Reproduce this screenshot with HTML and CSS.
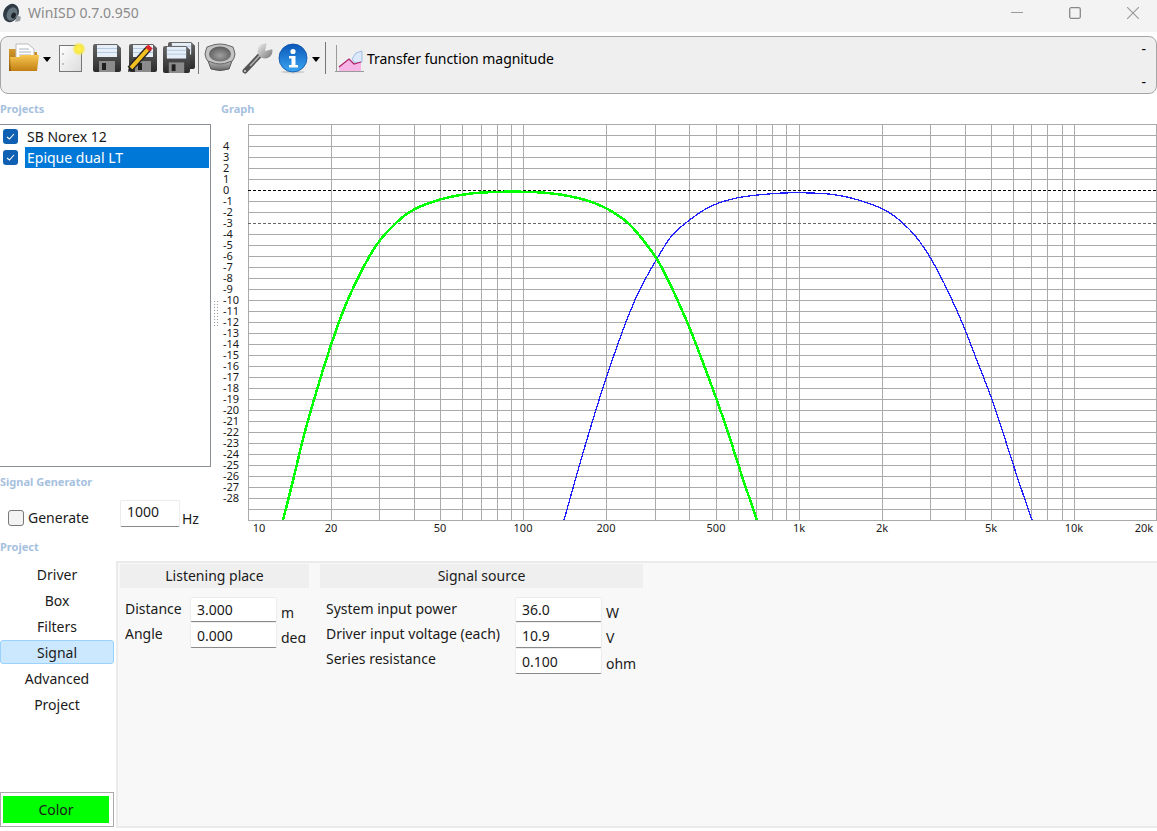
FILE: index.html
```html
<!DOCTYPE html>
<html lang="en">
<head>
    <meta charset="UTF-8">
    <meta name="viewport" content="width=device-width, initial-scale=1.0">
    <title>WinISD 0.7.0.950</title>
    <link rel="stylesheet" href="styles.css">
</head>
<body>
    <!-- shared gradients and the floppy disk used by the three save buttons -->
    <svg class="svg-defs" width="0" height="0" aria-hidden="true">
        <defs>
            <linearGradient id="disk" x1="0" y1="0" x2="0" y2="1">
                <stop offset="0" stop-color="#666"/>
                <stop offset="1" stop-color="#2b2b2b"/>
            </linearGradient>
            <linearGradient id="gold" x1="0" y1="0" x2="0" y2="1">
                <stop offset="0" stop-color="#f8c850"/>
                <stop offset="1" stop-color="#c27f14"/>
            </linearGradient>
            <linearGradient id="goldback" x1="0" y1="0" x2="0" y2="1">
                <stop offset="0" stop-color="#d59a2c"/>
                <stop offset="1" stop-color="#8f5c10"/>
            </linearGradient>
            <linearGradient id="page" x1="0" y1="0" x2="1" y2="1">
                <stop offset="0" stop-color="#fff"/>
                <stop offset="1" stop-color="#dcdcdc"/>
            </linearGradient>
            <radialGradient id="glow">
                <stop offset="0" stop-color="#fff25a"/>
                <stop offset="0.55" stop-color="#f8e83e"/>
                <stop offset="1" stop-color="#f8e83e" stop-opacity="0"/>
            </radialGradient>
            <radialGradient id="cone" cx="0.5" cy="0.6" r="0.6">
                <stop offset="0" stop-color="#a0a0a0"/>
                <stop offset="1" stop-color="#5a5a5a"/>
            </radialGradient>
            <linearGradient id="basket" x1="0" y1="0" x2="0" y2="1">
                <stop offset="0" stop-color="#d4d4d4"/>
                <stop offset="1" stop-color="#666"/>
            </linearGradient>
            <linearGradient id="steel" x1="0" y1="0" x2="1" y2="1">
                <stop offset="0" stop-color="#eee"/>
                <stop offset="1" stop-color="#777"/>
            </linearGradient>
            <linearGradient id="info" x1="0" y1="0" x2="0" y2="1">
                <stop offset="0" stop-color="#0b57b8"/>
                <stop offset="1" stop-color="#3aa6f2"/>
            </linearGradient>
            <symbol id="floppy" viewBox="0 0 28 28">
                <path d="M0 2a2 2 0 0 1 2-2H24l4 4V26a2 2 0 0 1-2 2H2a2 2 0 0 1-2-2Z" fill="url(#disk)"/>
                <rect x="4" y="1" width="20" height="12" fill="#e6eef7"/>
                <path d="M4 4.5H24M4 8.5H24" stroke="#b5cbe2"/>
                <rect x="6" y="17" width="16" height="11" fill="#8b8b8b"/>
                <rect x="9" y="19" width="4" height="7" fill="#1f1f1f"/>
            </symbol>
        </defs>
    </svg>

    <header class="titlebar">
        <svg class="app-icon" width="20" height="20" viewBox="0 0 20 20">
            <ellipse cx="9" cy="10" rx="7.5" ry="9.5" transform="rotate(25 9 10)" fill="#2f3a44"/>
            <ellipse cx="10" cy="11" rx="5" ry="7" transform="rotate(25 10 11)" fill="#66767f"/>
            <ellipse cx="11.5" cy="12.5" rx="2.2" ry="3" transform="rotate(25 11.5 12.5)" fill="#1d252b"/>
            <path d="M15 12l4 2-1 4-5 1Z" fill="#9aa1a6"/>
        </svg>
        <span class="app-title">WinISD 0.7.0.950</span>
        <div class="window-controls">
            <svg width="12" height="12" viewBox="0 0 12 12"><path d="M0 5.5H12" stroke="#999" stroke-width="1"/></svg>
            <svg width="12" height="12" viewBox="0 0 12 12"><rect x="0.7" y="0.7" width="10.6" height="10.6" rx="1.5" fill="none" stroke="#888" stroke-width="1.3"/></svg>
            <svg width="12" height="12" viewBox="0 0 12 12"><path d="M0 0L12 12M12 0L0 12" stroke="#999" stroke-width="1.1"/></svg>
        </div>
    </header>

    <div class="toolbar">
        <svg class="tool" width="34" height="32" viewBox="0 0 34 32">
            <path d="M2 7H11l2 3H30V29H2Z" fill="url(#goldback)"/>
            <path d="M9 2H21l6 5V19H9Z" fill="#fff" stroke="#bbb"/>
            <path d="M12 7H22M12 10H24M12 13H24M12 16H24" stroke="#a9b4bf"/>
            <path d="M3 15H12l2-2H32L30 29H4Z" fill="url(#gold)"/>
        </svg>
        <span class="drop-arrow"></span>
        <svg class="tool" width="36" height="32" viewBox="0 0 36 32">
            <rect x="6.5" y="3.5" width="22" height="26" fill="url(#page)" stroke="#777"/>
            <circle cx="10" cy="12" r="0.9" fill="#aaa"/>
            <circle cx="10" cy="22" r="0.9" fill="#aaa"/>
            <circle cx="26" cy="7" r="7" fill="url(#glow)"/>
        </svg>
        <svg class="tool" width="36" height="32" viewBox="0 0 36 32">
            <use href="#floppy" x="4" y="2" width="28" height="28"/>
        </svg>
        <svg class="tool" width="36" height="32" viewBox="0 0 36 32">
            <use href="#floppy" x="4" y="2" width="28" height="28"/>
            <path d="M5 27L24 6" stroke="#222" stroke-width="6.5"/>
            <path d="M5 27L24 6" stroke="#f4c020" stroke-width="4"/>
            <path d="M22.5 7.5L25.5 4.5" stroke="#d8262a" stroke-width="6"/>
            <path d="M3 30L4 24 8 28Z" fill="#222"/>
        </svg>
        <svg class="tool" width="36" height="32" viewBox="0 0 36 32">
            <use href="#floppy" x="7" y="0" width="27" height="27"/>
            <use href="#floppy" x="2" y="4" width="27" height="27"/>
        </svg>
        <span class="tool-sep"></span>
        <svg class="tool" width="40" height="32" viewBox="0 0 40 32">
            <path d="M7 16L11 27Q20 30 29 27L33 16Z" fill="url(#basket)" stroke="#555"/>
            <path d="M6 8Q6 4 10 4 20 0 30 4 34 4 34 8 36 12 34 16 33 20 29 20 20 24 11 20 7 20 6 16 4 12 6 8Z" fill="#c4c4c4" stroke="#666"/>
            <ellipse cx="20" cy="12" rx="11" ry="7.500" fill="url(#cone)"/>
        </svg>
        <svg class="tool" width="34" height="32" viewBox="0 0 34 32">
            <path d="M5 29L22 11" stroke="#555" stroke-width="5" stroke-linecap="round"/>
            <path d="M10 24L22 11" stroke="#b5b5b5" stroke-width="1.500"/>
            <circle cx="25" cy="9" r="7.500" fill="url(#steel)"/>
            <path d="M25 9L27 0 34 2 33 7Z" fill="#efefef"/>
            <circle cx="5" cy="29" r="1" fill="#ddd"/>
        </svg>
        <svg class="tool tool-info" width="36" height="32" viewBox="0 0 36 32">
            <ellipse cx="18" cy="30" rx="12" ry="1.5" fill="#cfcfcf"/>
            <circle cx="18" cy="16" r="14" fill="url(#info)"/>
            <circle cx="18" cy="16" r="14" fill="none" stroke="#0a4ea6" stroke-width="0.8"/>
            <circle cx="18" cy="9.5" r="2.6" fill="#fff"/>
            <path d="M14 14H20.5V23H23V25.500H14V23H16.500V16.500H14Z" fill="#fff"/>
        </svg>
        <span class="drop-arrow drop-arrow-info"></span>
        <span class="tool-sep tool-sep-chart"></span>
        <svg class="tool tool-chart" width="32" height="32" viewBox="0 0 32 32">
            <path d="M3.500 3V30M2 29.500H31" stroke="#9a9a9a"/>
            <path d="M19 17L23 11 29 9V20L22 21Z" fill="#dbe9fb" stroke="#9fbde4"/>
            <path d="M6 28V25L16 17 21 22 28 20V29H6Z" fill="#f6b5e6"/>
            <path d="M6 25L16 17 21 22 28 20" fill="none" stroke="#b0246a" stroke-width="1.300"/>
        </svg>
        <span class="toolbar-title">Transfer function magnitude</span>
        <div class="toolbar-end">
            <span>-</span>
            <span>-</span>
        </div>
    </div>

    <main class="upper">
        <section class="left-pane">
            <div class="pane-label">Projects</div>
            <ul class="project-list">
                <li class="project-item">
                    <span class="check"><svg width="9" height="7" viewBox="0 0 9 7"><path d="M1 4L3.500 6 8 1" fill="none" stroke="#fff" stroke-width="1.100"/></svg></span>
                    <span class="project-name">SB Norex 12</span>
                </li>
                <li class="project-item">
                    <span class="check"><svg width="9" height="7" viewBox="0 0 9 7"><path d="M1 4L3.500 6 8 1" fill="none" stroke="#fff" stroke-width="1.100"/></svg></span>
                    <span class="project-name selected">Epique dual LT</span>
                </li>
            </ul>
            <div class="pane-label generator-label">Signal Generator</div>
            <div class="generator">
                <input class="plain-check" type="checkbox" id="generate">
                <label class="generate-label" for="generate">Generate</label>
                <input class="field generator-field" type="text" value="1000">
                <span class="hz">Hz</span>
            </div>
        </section>

        <div class="splitter"><div class="grip"></div></div>

        <section class="graph-pane">
            <div class="pane-label graph-label">Graph</div>
            <svg class="graph" width="937" height="416" viewBox="220 124 937 416">
                <path class="grid" d="M248 124.500H1157M248 135.500H1157M248 146.500H1157M248 157.500H1157M248 168.500H1157M248 179.500H1157M248 201.500H1157M248 212.500H1157M248 234.500H1157M248 245.500H1157M248 256.500H1157M248 267.500H1157M248 278.500H1157M248 289.500H1157M248 300.500H1157M248 311.500H1157M248 322.500H1157M248 333.500H1157M248 344.500H1157M248 355.500H1157M248 366.500H1157M248 377.500H1157M248 388.500H1157M248 399.500H1157M248 410.500H1157M248 421.500H1157M248 432.500H1157M248 443.500H1157M248 454.500H1157M248 465.500H1157M248 476.500H1157M248 487.500H1157M248 498.500H1157M248 509.500H1157M248 520.500H1157"/>
                <path class="grid" d="M248.500 124V521M331.500 124V521M379.500 124V521M414.500 124V521M440.500 124V521M462.500 124V521M481.500 124V521M497.500 124V521M511.500 124V521M523.500 124V521M606.500 124V521M655.500 124V521M689.500 124V521M716.500 124V521M738.500 124V521M756.500 124V521M772.500 124V521M786.500 124V521M799.500 124V521M882.500 124V521M930.500 124V521M965.500 124V521M991.500 124V521M1013.500 124V521M1031.500 124V521M1047.500 124V521M1062.500 124V521M1074.500 124V521M1156.500 124V521"/>
                <path class="line-zero" d="M248 190.500H1157"/>
                <path class="line-3db" d="M248 223.500H1157"/>

                <path class="curve curve-blue" d="M564 520Q573.3 486.7 578.3 469.2Q583.3 451.7 588.3 435Q593.3 418.3 599.8 397.5Q606.3 376.7 614 355Q621.7 333.3 625.8 322.5Q630 311.7 635 300Q640 288.3 648 274.2Q656 260 662.2 250Q668.3 240 671.7 235.9Q675 231.7 682.2 225.9Q689.3 220 696.3 215Q703.3 210 710 206.7Q716.7 203.3 727.4 200.3Q738 197.3 747.4 196.2Q756.7 195 768.4 194Q780 193 790 192.8Q800 192.6 811.5 193Q823 193.3 831.5 194.3Q840 195.3 850 197.7Q860 200 871.2 204.2Q882.3 208.3 887.8 211.7Q893.3 215 898.3 219.2Q903.3 223.3 909.2 229.2Q915 235 919.2 240.9Q923.3 246.7 926.8 252Q930.3 257.3 935.2 266.2Q940 275 944.2 283.4Q948.3 291.7 952.5 300.9Q956.7 310 961 320Q965.3 330 971 345Q976.7 360 984 378.4Q991.3 396.7 997.3 415Q1003.3 433.3 1008.3 449.2Q1013.3 465 1018.3 480Q1023.3 495 1032 520"/>
                <path class="curve curve-green" d="M283 520Q291.7 486.7 297.5 461.7Q303.3 436.7 309.2 416.4Q315 396 322.5 371.5Q330 347 337.5 326Q345 305 353.4 287.5Q361.7 270 369.2 256.7Q376.7 243.3 385.9 233.2Q395 223 404 216Q413 209 426.5 204Q440 199 451.5 196.7Q463 194.3 473 193.3Q483 192.3 498 191.9Q513 191.5 523 191.8Q533 192 541.5 192.5Q550 193 560 194.5Q570 196 580 198.5Q590 201 598.2 204.5Q606.3 208 614.8 213.2Q623.3 218.3 630 225Q636.7 231.7 642.5 239.2Q648.3 246.7 652.5 252.5Q656.7 258.3 661.7 267.5Q666.7 276.7 671.7 287.5Q676.7 298.3 683 312.5Q689.3 326.7 696.3 345Q703.3 363.3 709.8 380.8Q716.3 398.3 723.2 418.3Q730 438.3 734.2 451.7Q738.3 465 743.3 480Q748.3 495 757 520"/>

                <g class="ticks">
                    <text x="223" y="150">4</text>
                    <text x="223" y="161">3</text>
                    <text x="223" y="172">2</text>
                    <text x="223" y="183">1</text>
                    <text x="223" y="194">0</text>
                    <text x="223" y="205">-1</text>
                    <text x="223" y="216">-2</text>
                    <text x="223" y="227">-3</text>
                    <text x="223" y="238">-4</text>
                    <text x="223" y="249">-5</text>
                    <text x="223" y="260">-6</text>
                    <text x="223" y="271">-7</text>
                    <text x="223" y="282">-8</text>
                    <text x="223" y="293">-9</text>
                    <text x="223" y="304">-10</text>
                    <text x="223" y="315">-11</text>
                    <text x="223" y="326">-12</text>
                    <text x="223" y="337">-13</text>
                    <text x="223" y="348">-14</text>
                    <text x="223" y="359">-15</text>
                    <text x="223" y="370">-16</text>
                    <text x="223" y="381">-17</text>
                    <text x="223" y="392">-18</text>
                    <text x="223" y="403">-19</text>
                    <text x="223" y="414">-20</text>
                    <text x="223" y="425">-21</text>
                    <text x="223" y="436">-22</text>
                    <text x="223" y="447">-23</text>
                    <text x="223" y="458">-24</text>
                    <text x="223" y="469">-25</text>
                    <text x="223" y="480">-26</text>
                    <text x="223" y="491">-27</text>
                    <text x="223" y="502">-28</text>
                </g>
                <g class="ticks ticks-x">
                    <text x="259" y="532">10</text>
                    <text x="331" y="532">20</text>
                    <text x="440" y="532">50</text>
                    <text x="523" y="532">100</text>
                    <text x="606" y="532">200</text>
                    <text x="716" y="532">500</text>
                    <text x="799" y="532">1k</text>
                    <text x="882" y="532">2k</text>
                    <text x="991" y="532">5k</text>
                    <text x="1074" y="532">10k</text>
                    <text x="1144" y="532">20k</text>
                </g>
            </svg>
        </section>
    </main>

    <section class="lower">
        <div class="pane-label">Project</div>
        <div class="lower-main">
            <nav class="side-nav">
                <a class="nav-item">Driver</a>
                <a class="nav-item">Box</a>
                <a class="nav-item">Filters</a>
                <a class="nav-item active">Signal</a>
                <a class="nav-item">Advanced</a>
                <a class="nav-item">Project</a>
                <button class="color-button"><span>Color</span></button>
            </nav>
            <div class="panel">
                <div class="group group-listening">
                    <div class="group-header">Listening place</div>
                    <div class="fields">
                        <span class="field-label">Distance</span>
                        <input class="field" type="text" value="3.000">
                        <span class="unit">m</span>
                        <span class="field-label">Angle</span>
                        <input class="field" type="text" value="0.000">
                        <span class="unit unit-cut">deg</span>
                    </div>
                </div>
                <div class="group group-source">
                    <div class="group-header">Signal source</div>
                    <div class="fields">
                        <span class="field-label">System input power</span>
                        <input class="field" type="text" value="36.0">
                        <span class="unit">W</span>
                        <span class="field-label">Driver input voltage (each)</span>
                        <input class="field" type="text" value="10.9">
                        <span class="unit">V</span>
                        <span class="field-label field-label-last">Series resistance</span>
                        <input class="field" type="text" value="0.100">
                        <span class="unit">ohm</span>
                    </div>
                </div>
            </div>
        </div>
    </section>
</body>
</html>
```

FILE: styles.css
```css
* {
    box-sizing: border-box;
}

body {
    display: flex;
    flex-direction: column;
    width: 1157px;
    height: 831px;
    margin: 0;
    overflow: hidden;
    background-color: white;
    color: #1a1a1a;
    font-family: "Noto Sans", Arial, sans-serif;
    font-size: 14px;
}

.svg-defs {
    position: absolute;
}

/* Title bar */
.titlebar {
    display: flex;
    align-items: center;
    height: 32px;
    flex-shrink: 0;
    padding-left: 2px;
    padding-bottom: 7px;
    background-color: #f3f3f3;
}

.app-title {
    margin-left: 6px;
    color: #8b8b8b;
}

.window-controls {
    display: flex;
    gap: 46px;
    margin-left: auto;
    margin-right: 18px;
}

/* Toolbar */
.toolbar {
    display: flex;
    align-items: flex-start;
    height: 58px;
    flex-shrink: 0;
    margin-top: 4px;
    padding: 5px 0 0 6px;
    background-color: #efefef;
    border: 1px solid #a5a5a5;
    border-radius: 8px;
}

.tool {
    flex-shrink: 0;
}

.drop-arrow {
    width: 0;
    height: 0;
    margin: 15px 2px 0 2px;
    border-left: 4.5px solid transparent;
    border-right: 4.5px solid transparent;
    border-top: 5px solid black;
}

.tool-sep {
    width: 1px;
    height: 32px;
    margin: 0 1px 0 1px;
    background-color: #777;
}

.tool-info {
    margin-left: 1px;
}

.drop-arrow-info {
    margin-left: 1px;
}

.tool-sep-chart {
    margin-left: 3px;
}

.tool-chart {
    margin-left: 6px;
}

.toolbar-title {
    margin-left: 2px;
    margin-top: 7px;
    letter-spacing: -0.05px;
    color: black;
}

.toolbar-end {
    display: flex;
    flex-direction: column;
    justify-content: space-between;
    height: 53px;
    margin-left: auto;
    margin-right: 10px;
    margin-top: -3px;
    line-height: 20px;
    font-size: 14px;
    color: black;
}

/* Upper half: project list and graph */
.upper {
    display: flex;
    height: 446px;
    flex-shrink: 0;
}

.left-pane {
    width: 211px;
    flex-shrink: 0;
    padding-top: 7px;
}

.pane-label {
    height: 15px;
    line-height: 15px;
    font-size: 11px;
    font-weight: 700;
    color: #a6c1de;
}

.project-list {
    height: 343px;
    margin: 8px 0 0 0;
    padding: 1px 1px 0 0;
    list-style: none;
    border: 1px solid #8a8f96;
    border-left: none;
}

.project-item {
    display: flex;
    align-items: center;
    height: 21px;
    padding-left: 3px;
}

.check {
    display: flex;
    align-items: center;
    justify-content: center;
    width: 15px;
    height: 15px;
    flex-shrink: 0;
    background-color: #0f5fb3;
    border-radius: 3px;
}

.project-name {
    flex-grow: 1;
    height: 21px;
    line-height: 21px;
    margin-left: 7px;
    padding-left: 2px;
}

.selected {
    background-color: #0078d7;
    color: white;
}

.generator-label {
    margin-top: 7px;
}

.generator {
    display: flex;
    align-items: flex-start;
    margin-top: 11px;
    padding-left: 8px;
}

.plain-check {
    appearance: none;
    flex-shrink: 0;
    width: 16px;
    height: 16px;
    margin: 10px 0 0 0;
    background-color: #f3f3f3;
    border: 1px solid #777;
    border-radius: 3px;
}

.generate-label {
    flex-shrink: 0;
    width: 92px;
    margin: 8px 0 0 4px;
}

.generator .generator-field {
    width: 60px;
    height: 27px;
    flex-shrink: 0;
    padding-bottom: 4px;
}

.hz {
    margin: 9px 0 0 2px;
}

.splitter {
    width: 9px;
    flex-shrink: 0;
    padding: 206px 0 0 2px;
}

.grip {
    width: 7px;
    height: 28px;
    background-image: radial-gradient(circle, #999 0.8px, transparent 1px);
    background-size: 3px 3px;
}

.graph-pane {
    flex-grow: 1;
    padding-top: 7px;
}

.graph-label {
    padding-left: 1px;
}

.graph {
    display: block;
    margin-top: 8px;
}

.grid {
    fill: none;
    stroke: #aaa;
    stroke-width: 1;
    shape-rendering: crispEdges;
}

.line-zero {
    stroke: black;
    stroke-dasharray: 3 2;
    shape-rendering: crispEdges;
}

.line-3db {
    stroke: #666;
    stroke-dasharray: 3 2;
    shape-rendering: crispEdges;
}

.curve {
    fill: none;
    stroke-linejoin: round;
    shape-rendering: crispEdges;
}

.curve-green {
    stroke: #00ff00;
    stroke-width: 2.5;
}

.curve-blue {
    stroke: #2222ff;
    stroke-width: 1.3;
}

.ticks {
    font-size: 11px;
    fill: #1a1a1a;
}

.ticks-x {
    text-anchor: middle;
}

/* Lower half: navigation and signal panel */
.lower {
    display: flex;
    flex-direction: column;
    flex-grow: 1;
    margin-top: -1px;
}

.lower-main {
    display: flex;
    height: 267px;
    margin-top: 7px;
    gap: 2px;
}

.side-nav {
    display: flex;
    flex-direction: column;
    gap: 2px;
    width: 114px;
    flex-shrink: 0;
    padding: 1px 0 1px 0;
}

.nav-item {
    height: 24px;
    line-height: 24px;
    text-align: center;
    border: 1px solid transparent;
    border-radius: 3px;
}

.nav-item.active {
    background-color: #cce8ff;
    border-color: #99d1ff;
}

.color-button {
    height: 35px;
    margin-top: auto;
    padding: 3px 4px 3px 2px;
    background: white;
    border: 1px solid #aaa;
    font: inherit;
    color: #1a1a1a;
}

.color-button span {
    display: block;
    height: 27px;
    line-height: 27px;
    background-color: #00ff00;
}

.panel {
    display: flex;
    align-items: flex-start;
    gap: 11px;
    flex-grow: 1;
    padding: 1px 0 0 2px;
    background-color: #f8f8f8;
    border: 2px solid #ebebeb;
    border-right: none;
}

.group-listening {
    width: 189px;
}

.group-source {
    width: 323px;
}

.group-header {
    height: 24px;
    line-height: 24px;
    text-align: center;
    background-color: #efefef;
}

.fields {
    display: grid;
    grid-template-rows: 25px 26px 26px;
    margin-top: 9px;
    padding-left: 5px;
}

.group-listening .fields {
    grid-template-columns: 65px 87px auto;
}

.group-source .fields {
    grid-template-columns: 189px 87px auto;
    padding-left: 6px;
}

.field-label {
    line-height: 24px;
    white-space: nowrap;
}

.field-label-last {
    margin-top: -1px;
}

.field {
    width: 100%;
    height: 100%;
    padding: 0 0 0 6px;
    background-color: white;
    border: 1px solid #ececec;
    border-bottom-color: #8a8a8a;
    border-radius: 2px;
    font: inherit;
    color: #1a1a1a;
    outline: none;
}

.unit {
    margin: 6px 0 0 4px;
    line-height: 20px;
}

.unit-cut {
    height: 15px;
    overflow: hidden;
}
```
